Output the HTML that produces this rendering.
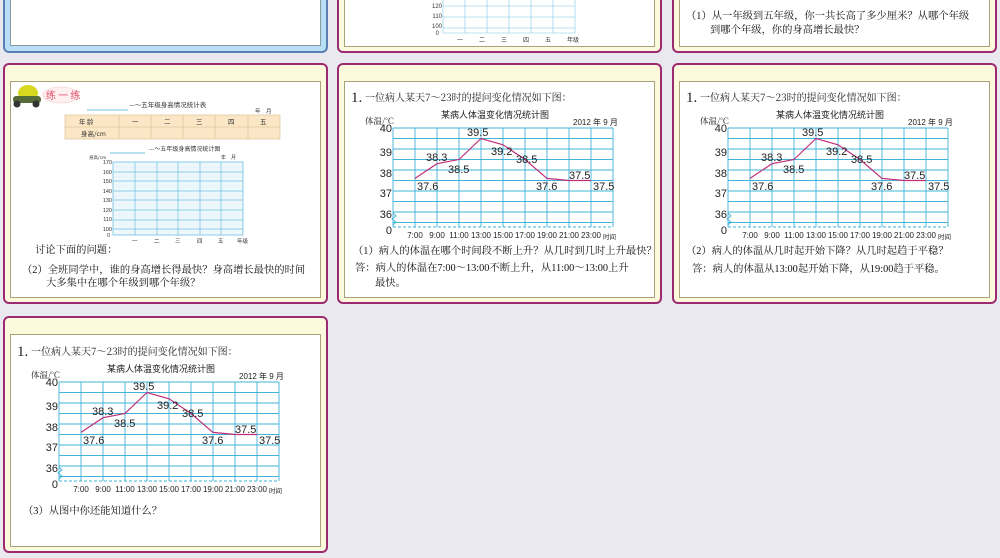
<!DOCTYPE html>
<html><head><meta charset="utf-8"><style>
*{margin:0;padding:0;box-sizing:border-box}
body{width:1000px;height:556px;background:#e9e9ef;position:relative;overflow:hidden;font-family:"Liberation Sans","Noto Sans CJK SC",sans-serif;color:#222}
.s{position:absolute;width:325px;border:2px solid #9c2a72;border-radius:6px;background:#fdf9dc}
.in{position:absolute;left:5px;right:5px;top:16px;bottom:4px;background:#fff;border:1px solid #a8a27a}
.t{position:absolute;white-space:nowrap;font-family:"Liberation Serif","Noto Serif CJK SC",serif;font-size:10.3px;color:#111}
svg{position:absolute;left:-2px;top:-2px}
</style></head><body>

<div style="position:absolute;left:3px;top:-10px;width:325px;height:63px;border:2px solid #5b7fb0;border-radius:6px;background:#b8e0f6">
 <div style="position:absolute;left:5px;right:5px;top:0;bottom:5px;background:#fff;border:1px solid #8a9aa0"></div>
</div>
<div class="s" style="left:337px;top:-10px;height:63px">
 <div class="in" style="top:0"></div>
 <svg width="325" height="63" style="left:-2px;top:-2px">
  <g stroke="#7cc8e6" stroke-width="0.6">
   <line x1="106" y1="0" x2="106" y2="43"/><line x1="128" y1="0" x2="128" y2="43"/><line x1="150" y1="0" x2="150" y2="43"/><line x1="172" y1="0" x2="172" y2="43"/><line x1="194" y1="0" x2="194" y2="43"/><line x1="216" y1="0" x2="216" y2="43"/><line x1="238" y1="0" x2="238" y2="43"/>
   <line x1="106" y1="16" x2="238" y2="16"/><line x1="106" y1="27" x2="238" y2="27"/><line x1="106" y1="38" x2="238" y2="38"/><line x1="106" y1="43" x2="238" y2="43"/>
  </g>
  <g font-size="6" fill="#333" text-anchor="end" font-family="Liberation Sans"><text x="105" y="18">120</text><text x="105" y="28">110</text><text x="105" y="38">100</text><text x="102" y="45">0</text></g>
  <g font-size="6" fill="#333" font-family="Noto Sans CJK SC"><text x="120" y="52">一</text><text x="142" y="52">二</text><text x="164" y="52">三</text><text x="186" y="52">四</text><text x="208" y="52">五</text><text x="230" y="52">年级</text></g>
 </svg>
</div>
<div class="s" style="left:672px;top:-10px;height:63px">
 <div class="in" style="top:0"></div>
 <div class="t" style="left:12px;top:15px">（1）从一年级到五年级，你一共长高了多少厘米？从哪个年级</div>
 <div class="t" style="left:36px;top:29px">到哪个年级，你的身高增长最快？</div>
</div>

<div class="s" style="left:3px;top:63px;height:241px">
 <div class="in"></div>
 <svg width="325" height="241">
  <ellipse cx="25" cy="30" rx="10" ry="8" fill="#d8d820"/>
  <rect x="10" y="33" width="28" height="7" rx="3" fill="#556b3a"/>
  <circle cx="14" cy="41" r="3.5" fill="#333"/><circle cx="33" cy="41" r="3.5" fill="#333"/>
  <ellipse cx="58" cy="32" rx="18" ry="8" fill="#fff0f0" stroke="#f4c8c8" stroke-width="0.6"/>
  <text x="43" y="36" font-size="10" fill="#e0506a" font-family="Noto Sans CJK SC">练 一 练</text>
  <line x1="84" y1="47" x2="125" y2="47" stroke="#6cc0e0"/>
  <text x="126" y="44" font-size="6.5" fill="#333" font-family="Noto Sans CJK SC">—～五年级身高情况统计表</text>
  <text x="252" y="50" font-size="5.5" fill="#333" font-family="Noto Sans CJK SC">年　月</text>
  <rect x="62" y="52" width="215" height="24" fill="#fbe7c6" stroke="#d9b98a" stroke-width="0.6"/>
  <g stroke="#d9b98a" stroke-width="0.6"><line x1="62" y1="64" x2="277" y2="64"/><line x1="116" y1="52" x2="116" y2="76"/><line x1="148" y1="52" x2="148" y2="76"/><line x1="180" y1="52" x2="180" y2="76"/><line x1="212" y1="52" x2="212" y2="76"/><line x1="245" y1="52" x2="245" y2="76"/></g>
  <g font-size="6.5" fill="#333" font-family="Noto Sans CJK SC"><text x="76" y="61">年 龄</text><text x="78" y="73">身高/cm</text><text x="129" y="61">一</text><text x="161" y="61">二</text><text x="193" y="61">三</text><text x="225" y="61">四</text><text x="257" y="61">五</text></g>
  <line x1="107" y1="90" x2="142" y2="90" stroke="#6cc0e0"/>
  <text x="146" y="88" font-size="6" fill="#333" font-family="Noto Sans CJK SC">—～五年级身高情况统计图</text>
  <text x="86" y="96" font-size="4.5" fill="#333" font-family="Noto Sans CJK SC">身高/cm</text>
  <text x="218" y="96" font-size="5" fill="#333" font-family="Noto Sans CJK SC">年　月</text>
  <rect x="110" y="99" width="130" height="73" fill="#eef8fc" stroke="#6cc0e0" stroke-width="0.8"/>
  <g stroke="#bfe3f1" stroke-width="0.4" stroke-dasharray="1 1">
   <line x1="110" y1="104" x2="240" y2="104"/><line x1="110" y1="114" x2="240" y2="114"/><line x1="110" y1="123" x2="240" y2="123"/><line x1="110" y1="133" x2="240" y2="133"/><line x1="110" y1="142" x2="240" y2="142"/><line x1="110" y1="152" x2="240" y2="152"/><line x1="110" y1="161" x2="240" y2="161"/>
  </g>
  <g stroke="#6cc0e0" stroke-width="0.7">
   <line x1="132" y1="99" x2="132" y2="172"/><line x1="154" y1="99" x2="154" y2="172"/><line x1="175" y1="99" x2="175" y2="172"/><line x1="197" y1="99" x2="197" y2="172"/><line x1="218" y1="99" x2="218" y2="172"/>
   <line x1="110" y1="109" x2="240" y2="109"/><line x1="110" y1="118" x2="240" y2="118"/><line x1="110" y1="128" x2="240" y2="128"/><line x1="110" y1="137" x2="240" y2="137"/><line x1="110" y1="147" x2="240" y2="147"/><line x1="110" y1="157" x2="240" y2="157"/><line x1="110" y1="166" x2="240" y2="166"/>
  </g>
  <g font-size="5.5" fill="#333" text-anchor="end" font-family="Liberation Sans"><text x="109" y="101">170</text><text x="109" y="111">160</text><text x="109" y="120">150</text><text x="109" y="130">140</text><text x="109" y="139">130</text><text x="109" y="149">120</text><text x="109" y="158">110</text><text x="109" y="168">100</text><text x="107" y="174">0</text></g>
  <g font-size="5.5" fill="#333" font-family="Noto Sans CJK SC"><text x="129" y="180">一</text><text x="151" y="180">二</text><text x="172" y="180">三</text><text x="194" y="180">四</text><text x="215" y="180">五</text><text x="234" y="180">年级</text></g>
 </svg>
 <div class="t" style="left:30px;top:176px">讨论下面的问题：</div>
 <div class="t" style="left:17px;top:196px">（2）全班同学中，谁的身高增长得最快？身高增长最快的时间</div>
 <div class="t" style="left:41px;top:209px">大多集中在哪个年级到哪个年级？</div>
</div>

<div class="s" style="left:337px;top:63px;height:241px">
 <div class="in"></div>
 <svg width="325" height="241">
  <g id="chart">
  <g stroke="#3fb3d9" stroke-width="0.9">
   <line x1="56" y1="65" x2="56" y2="164"/><line x1="78" y1="65" x2="78" y2="164"/><line x1="100" y1="65" x2="100" y2="164"/><line x1="122" y1="65" x2="122" y2="164"/><line x1="144" y1="65" x2="144" y2="164"/><line x1="166" y1="65" x2="166" y2="164"/><line x1="188" y1="65" x2="188" y2="164"/><line x1="210" y1="65" x2="210" y2="164"/><line x1="232" y1="65" x2="232" y2="164"/><line x1="254" y1="65" x2="254" y2="164"/><line x1="276" y1="65" x2="276" y2="164"/>
   <line x1="56" y1="65" x2="276" y2="65"/><line x1="56" y1="75.5" x2="276" y2="75.5"/><line x1="56" y1="86" x2="276" y2="86"/><line x1="56" y1="96.5" x2="276" y2="96.5"/><line x1="56" y1="107" x2="276" y2="107"/><line x1="56" y1="117.5" x2="276" y2="117.5"/><line x1="56" y1="128" x2="276" y2="128"/><line x1="56" y1="138.5" x2="276" y2="138.5"/><line x1="56" y1="149" x2="276" y2="149"/><line x1="56" y1="159.5" x2="276" y2="159.5"/>
   <line x1="56" y1="164" x2="276" y2="164" stroke-dasharray="3 2"/>
  </g>
  <polyline points="56,150 59,153 55,156 59,159 56,162" fill="none" stroke="#3fb3d9" stroke-width="0.9"/>
  <polyline points="78,115.4 100,100.7 122,96.5 144,75.5 166,81.8 188,96.5 210,115.4 232,117.5 254,117.5" fill="none" stroke="#c0307a" stroke-width="1.2"/>
  <g font-size="11" fill="#222" font-family="Liberation Sans">
   <text x="80" y="127">37.6</text><text x="89" y="98">38.3</text><text x="111" y="110">38.5</text><text x="130" y="73">39.5</text><text x="154" y="92">39.2</text><text x="179" y="100">38.5</text><text x="199" y="127">37.6</text><text x="232" y="116">37.5</text><text x="256" y="127">37.5</text>
  </g>
  <g font-size="11" fill="#222" text-anchor="end" font-family="Liberation Sans"><text x="55" y="69">40</text><text x="55" y="93">39</text><text x="55" y="114">38</text><text x="55" y="134">37</text><text x="55" y="155">36</text><text x="55" y="171">0</text></g>
  <g font-size="8" fill="#222" text-anchor="middle" font-family="Liberation Sans"><text x="78" y="175">7:00</text><text x="100" y="175">9:00</text><text x="122" y="175">11:00</text><text x="144" y="175">13:00</text><text x="166" y="175">15:00</text><text x="188" y="175">17:00</text><text x="210" y="175">19:00</text><text x="232" y="175">21:00</text><text x="254" y="175">23:00</text></g>
  <text x="266" y="176" font-size="6.5" fill="#222" font-family="Noto Sans CJK SC">时间</text>
  <text x="28" y="61" font-size="8.5" fill="#222" font-family="Noto Serif CJK SC">体温/°C</text>
  <text x="236" y="62" font-size="8" fill="#222" font-family="Liberation Sans">2012 年 9 月</text>
  <text x="104" y="55" font-size="9" fill="#222" font-family="Noto Sans CJK SC">某病人体温变化情况统计图</text>
  <text x="14" y="39" font-size="15" fill="#222" font-family="Liberation Serif">1.</text>
  <text x="28" y="38" font-size="10" fill="#222" font-family="Noto Serif CJK SC">一位病人某天7～23时的提问变化情况如下图：</text>
  </g>
 </svg>
 <div class="t" style="left:14px;top:177px">（1）病人的体温在哪个时间段不断上升？从几时到几时上升最快？</div>
 <div class="t" style="left:16px;top:194px">答：病人的体温在7:00～13:00不断上升，从11:00～13:00上升</div>
 <div class="t" style="left:36px;top:209px">最快。</div>
</div>

<div class="s" style="left:672px;top:63px;height:241px">
 <div class="in"></div>
 <svg width="325" height="241"><use href="#chart"/></svg>
 <div class="t" style="left:12px;top:177px">（2）病人的体温从几时起开始下降？从几时起趋于平稳？</div>
 <div class="t" style="left:18px;top:195px">答：病人的体温从13:00起开始下降，从19:00趋于平稳。</div>
</div>

<div class="s" style="left:3px;top:316px;height:237px">
 <div class="in"></div>
 <svg width="325" height="241" style="top:-1px"><use href="#chart"/></svg>
 <div class="t" style="left:18px;top:184px">（3）从图中你还能知道什么？</div>
</div>

</body></html>
